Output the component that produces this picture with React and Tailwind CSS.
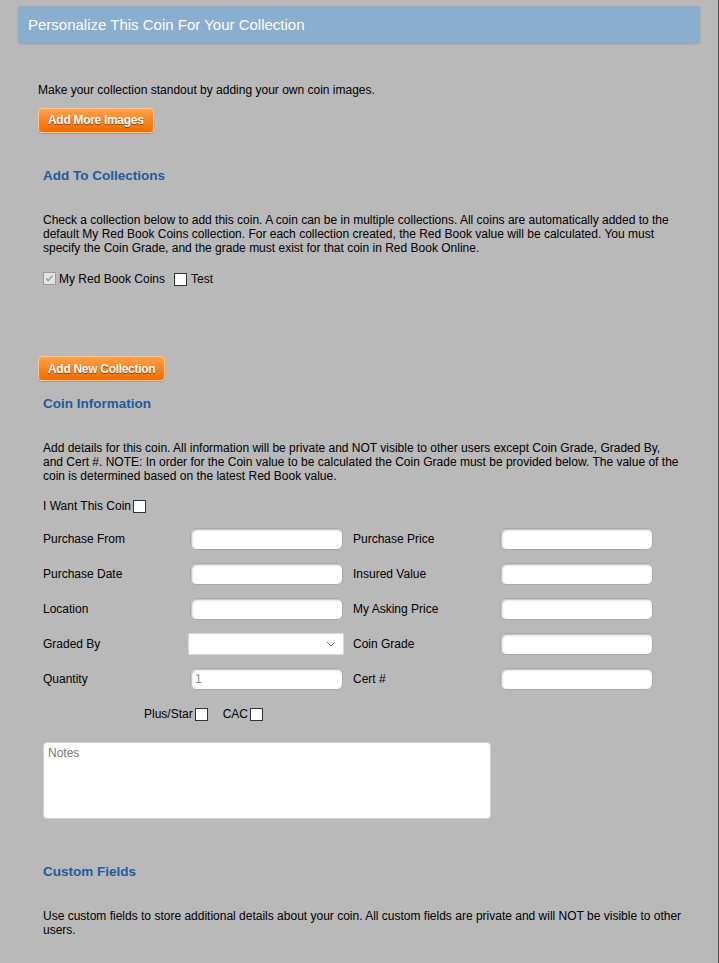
import React from 'react';

const Box = ({ checked }) => (
  <span
    className={
      'inline-block w-[13px] h-[13px] border align-middle relative ' +
      (checked ? 'border-[#9a9a9a] bg-[#e4e4e4]' : 'border-[#333] bg-white')
    }
  >
    {checked && (
      <svg viewBox="0 0 13 13" className="absolute left-0 top-0 w-[11px] h-[11px]">
        <path d="M2.5 6.5 L5 9 L10 3" fill="none" stroke="#8a8a8a" strokeWidth="1.3" />
      </svg>
    )}
  </span>
);

const OrangeButton = ({ children }) => (
  <button
    className="h-[25px] px-[9px] rounded-[4px] border border-[#ffc48a] bg-gradient-to-b from-[#ffa24a] via-[#fb8420] to-[#ef6c00] text-white font-bold text-[12px] tracking-[-0.3px] leading-none [text-shadow:0_1px_1px_rgba(90,40,0,0.75)] shadow-[0_1px_1px_rgba(0,0,0,0.15)]"
  >
    {children}
  </button>
);

const TextInput = ({ value }) => (
  <div className="w-[153px] h-[22px] bg-white rounded-[6px] border border-[#a9a9a9] shadow-[inset_1px_1px_2px_rgba(0,0,0,0.3)] flex items-center pl-[4px] text-[12px] text-[#8a8a8a]">
    {value}
  </div>
);

const SelectBox = () => (
  <div className="w-[156px] h-[22px] -ml-[2px] mr-[-1px] bg-white rounded-[2px] border border-[#d8d8d8] flex items-center justify-end pr-[7px]">
    <svg width="10" height="6" viewBox="0 0 10 6">
      <path d="M1 1 L5 5 L9 1" fill="none" stroke="#777" strokeWidth="1" />
    </svg>
  </div>
);

const Heading = ({ children, className }) => (
  <h3 className={'ml-[43px] text-[13.5px] leading-[16px] font-bold text-[#1f5b9c] ' + (className || '')}>{children}</h3>
);

const Para = ({ lines, className }) => (
  <p className={'ml-[43px] text-[12px] leading-[14px] text-black ' + (className || '')}>
    {lines.map((l, i) => (
      <React.Fragment key={i}>
        {l}
        {i < lines.length - 1 && <br />}
      </React.Fragment>
    ))}
  </p>
);

const Row = ({ left, right }) => (
  <div className="flex items-center h-[22px]">
    <span className="w-[147px] text-[12px]">{left.label}</span>
    {left.field}
    <span className="w-[147px] ml-[10px] text-[12px]">{right.label}</span>
    {right.field}
  </div>
);

export default function App() {
  const rows = [
    [{ label: 'Purchase From', field: <TextInput /> }, { label: 'Purchase Price', field: <TextInput /> }],
    [{ label: 'Purchase Date', field: <TextInput /> }, { label: 'Insured Value', field: <TextInput /> }],
    [{ label: 'Location', field: <TextInput /> }, { label: 'My Asking Price', field: <TextInput /> }],
    [{ label: 'Graded By', field: <SelectBox /> }, { label: 'Coin Grade', field: <TextInput /> }],
    [{ label: 'Quantity', field: <TextInput value="1" /> }, { label: 'Cert #', field: <TextInput /> }],
  ];

  return (
    <div className="w-[719px] min-h-[963px] bg-[#b9b9b9] border-r border-[#555] font-['Liberation_Sans',Arial,sans-serif] text-black pt-[6px] pb-[20px]">
      <div className="mx-[18px] h-[37px] bg-[#8aaecd] rounded-[3px] shadow-[0_1px_2px_rgba(0,0,0,0.15)] flex items-center pl-[10px] pt-[1px] text-white text-[15px]">
        Personalize This Coin For Your Collection
      </div>

      <p className="ml-[38px] mt-[40px] text-[12px] leading-[14px]">
        Make your collection standout by adding your own coin images.
      </p>
      <div className="ml-[38px] mt-[10px]">
        <OrangeButton>Add More Images</OrangeButton>
      </div>

      <Heading className="mt-[35px]">Add To Collections</Heading>
      <Para
        className="mt-[29px]"
        lines={[
          'Check a collection below to add this coin. A coin can be in multiple collections. All coins are automatically added to the',
          'default My Red Book Coins collection. For each collection created, the Red Book value will be calculated. You must',
          'specify the Coin Grade, and the grade must exist for that coin in Red Book Online.',
        ]}
      />
      <div className="ml-[43px] mt-[16px] h-[16px] flex items-center text-[12px]">
        <Box checked />
        <span className="ml-[3px]">My Red Book Coins</span>
        <span className="ml-[9px]"><Box /></span>
        <span className="ml-[4px]">Test</span>
      </div>

      <div className="ml-[38px] mt-[69px]">
        <OrangeButton>Add New Collection</OrangeButton>
      </div>

      <Heading className="mt-[15px]">Coin Information</Heading>
      <Para
        className="mt-[29px]"
        lines={[
          'Add details for this coin. All information will be private and NOT visible to other users except Coin Grade, Graded By,',
          'and Cert #. NOTE: In order for the Coin value to be calculated the Coin Grade must be provided below. The value of the',
          'coin is determined based on the latest Red Book value.',
        ]}
      />
      <div className="ml-[43px] mt-[15px] h-[16px] flex items-center text-[12px]">
        <span className="mr-[2px]">I Want This Coin</span>
        <Box />
      </div>

      <div className="ml-[43px] mt-[14px] flex flex-col gap-[13px]">
        {rows.map((r, i) => (
          <Row key={i} left={r[0]} right={r[1]} />
        ))}
      </div>

      <div className="ml-[144px] mt-[16px] h-[16px] flex items-center text-[12px]">
        <span className="mr-[2px]">Plus/Star</span>
        <Box />
        <span className="ml-[15px] mr-[2px]">CAC</span>
        <Box />
      </div>

      <div className="ml-[43px] mt-[20px] w-[448px] h-[77px] bg-white rounded-[4px] border border-[#d0d0d0] px-[4px] pt-[1px] text-[12px] text-[#777]">
        Notes
      </div>

      <Heading className="mt-[45px]">Custom Fields</Heading>
      <Para
        className="mt-[29px]"
        lines={[
          'Use custom fields to store additional details about your coin. All custom fields are private and will NOT be visible to other',
          'users.',
        ]}
      />
    </div>
  );
}
